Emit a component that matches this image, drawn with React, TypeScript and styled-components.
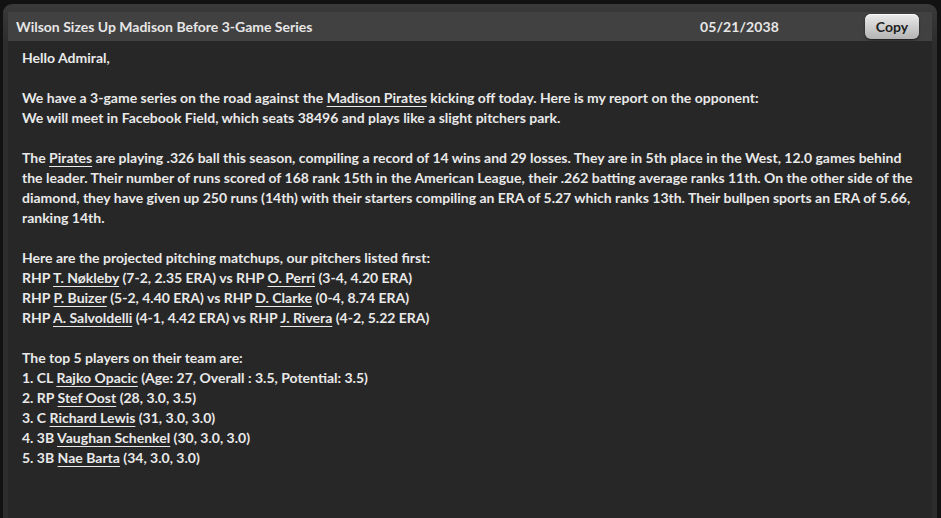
import React from "react";
import styled, { createGlobalStyle } from "styled-components";

const GlobalStyle = createGlobalStyle`
  html, body {
    margin: 0;
    padding: 0;
    background: #121212;
    height: 100%;
  }
  #root {
    height: 100%;
  }
`;

const pitchers = [
  { a: "T. Nøkleby", ar: "(7-2, 2.35 ERA)", b: "O. Perri", br: "(3-4, 4.20 ERA)" },
  { a: "P. Buizer", ar: "(5-2, 4.40 ERA)", b: "D. Clarke", br: "(0-4, 8.74 ERA)" },
  { a: "A. Salvoldelli", ar: "(4-1, 4.42 ERA)", b: "J. Rivera", br: "(4-2, 5.22 ERA)" },
];

const players = [
  { pre: "1. CL", name: "Rajko Opacic", rest: "(Age: 27, Overall : 3.5, Potential: 3.5)" },
  { pre: "2. RP", name: "Stef Oost", rest: "(28, 3.0, 3.5)" },
  { pre: "3. C", name: "Richard Lewis", rest: "(31, 3.0, 3.0)" },
  { pre: "4. 3B", name: "Vaughan Schenkel", rest: "(30, 3.0, 3.0)" },
  { pre: "5. 3B", name: "Nae Barta", rest: "(34, 3.0, 3.0)" },
];

const App = () => {
  return (
    <Page>
      <GlobalStyle />
      <Panel>
        <Header>
          <Title>Wilson Sizes Up Madison Before 3-Game Series</Title>
          <DateText>05/21/2038</DateText>
          <CopyButton>Copy</CopyButton>
        </Header>
        <Body>
          <Para>Hello Admiral,</Para>
          <Para>
            <Line>
              We have a 3-game series on the road against the <Link>Madison Pirates</Link> kicking off today. Here is my report on the opponent:
            </Line>
            <Line>We will meet in Facebook Field, which seats 38496 and plays like a slight pitchers park.</Line>
          </Para>
          <Para>
            <Line>
              The <Link>Pirates</Link> are playing .326 ball this season, compiling a record of 14 wins and 29 losses. They are in 5th place in the West, 12.0 games behind
            </Line>
            <Line>
              the leader. Their number of runs scored of 168 rank 15th in the American League, their .262 batting average ranks 11th. On the other side of the
            </Line>
            <Line>
              diamond, they have given up 250 runs (14th) with their starters compiling an ERA of 5.27 which ranks 13th. Their bullpen sports an ERA of 5.66,
            </Line>
            <Line>ranking 14th.</Line>
          </Para>
          <Para>
            <Line>Here are the projected pitching matchups, our pitchers listed first:</Line>
            {pitchers.map((p) => (
              <Line key={p.a}>
                RHP <Link>{p.a}</Link> {p.ar} vs RHP <Link>{p.b}</Link> {p.br}
              </Line>
            ))}
          </Para>
          <Para>
            <Line>The top 5 players on their team are:</Line>
            {players.map((p) => (
              <Line key={p.name}>
                {p.pre} <Link>{p.name}</Link> {p.rest}
              </Line>
            ))}
          </Para>
        </Body>
      </Panel>
    </Page>
  );
};

export default App;

const Page = styled.div`
  height: 100%;
  padding: 4px 4px 0 3px;
  box-sizing: border-box;
  display: flex;
  flex-direction: column;
`;

const Panel = styled.div`
  flex: 1;
  display: flex;
  flex-direction: column;
  background: #2d2d2d;
  border-radius: 9px 9px 0 0;
  padding: 8px 5px 0 5px;
  background-image: linear-gradient(#3a3a3a, #2d2d2d 40px);
`;

const Header = styled.div`
  height: 29px;
  background: #414141;
  display: flex;
  align-items: center;
  font-family: Lato, "Open Sans", sans-serif;
  color: #e6e6e6;
`;

const Title = styled.div`
  flex: 1;
  padding-left: 8px;
  font-size: 14px;
  font-weight: 700;
`;

const DateText = styled.div`
  font-size: 14px;
  font-weight: 700;
  letter-spacing: 0.1px;
  margin-right: 86px;
`;

const CopyButton = styled.button`
  width: 54px;
  height: 25px;
  margin-right: 13px;
  border: none;
  border-radius: 6px;
  background: linear-gradient(#ececec, #c9c9c9 60%, #b4b4b4);
  box-shadow: inset 0 1px 0 #fafafa, 0 1px 2px rgba(0, 0, 0, 0.6);
  color: #1e1e1e;
  font-family: Lato, "Open Sans", sans-serif;
  font-weight: 700;
  font-size: 14px;
  padding: 0;
`;

const Body = styled.div`
  flex: 1;
  background: #272727;
  padding: 7px 4px 0 14px;
  font-family: Lato, "Open Sans", sans-serif;
  font-size: 14px;
  font-weight: 700;
  line-height: 20px;
  color: #e9e9e9;
`;

const Para = styled.div`
  margin-bottom: 20px;
`;

const Line = styled.div`
  white-space: nowrap;
`;

const Link = styled.span`
  text-decoration: underline;
  text-underline-offset: 3px;
  text-decoration-thickness: 1px;
`;
